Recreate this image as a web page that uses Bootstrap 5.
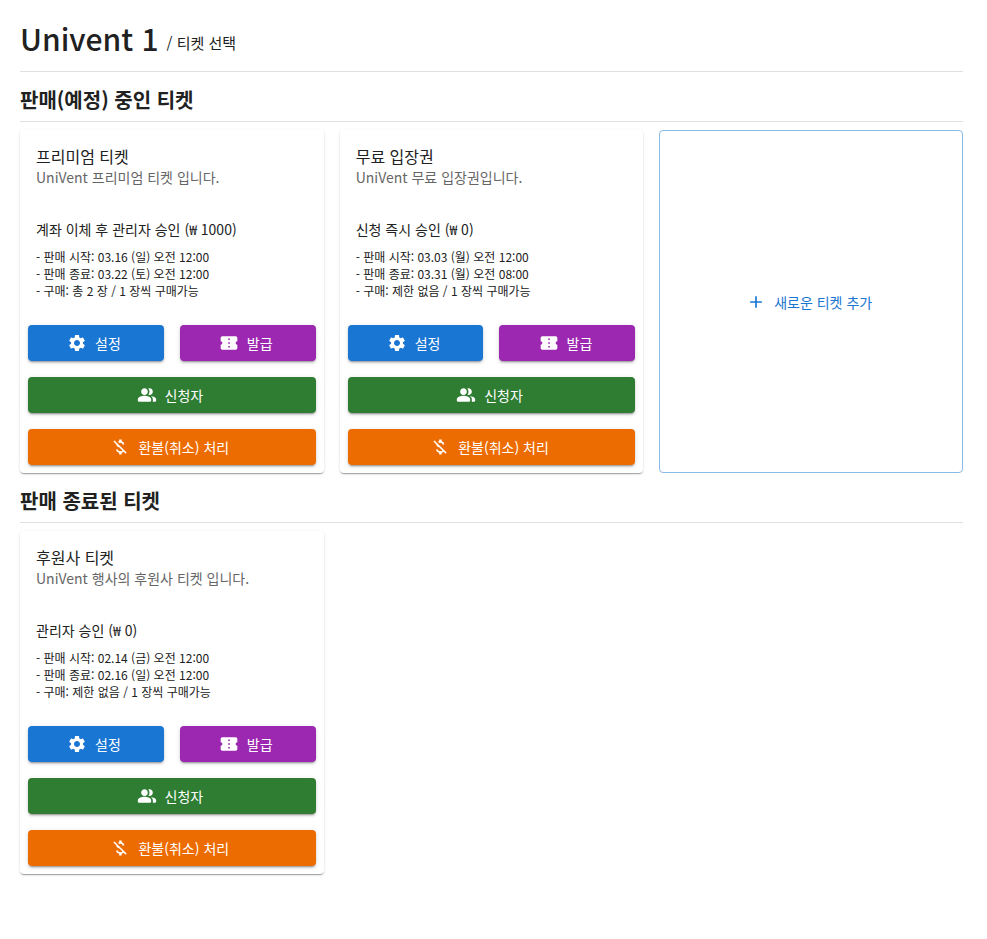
<!DOCTYPE html>
<html lang="ko">
<head>
<meta charset="utf-8">
<meta name="viewport" content="width=device-width, initial-scale=1">
<title>Univent 1 / 티켓 선택</title>
<link href="https://cdn.jsdelivr.net/npm/bootstrap@5.3.0/dist/css/bootstrap.min.css" rel="stylesheet">
<style>
body{font-family:"Noto Sans CJK KR","Noto Sans",sans-serif;color:#212121;background:#fff;font-size:14px;line-height:22px}
.page{padding:16px 24px 40px 20px}
.page-head{border-bottom:1px solid #e0e0e0;padding-bottom:11px}
.page-title{font-size:30px;line-height:44px;font-weight:500}
.crumb{font-size:15px;line-height:34px}
.section-title{font-size:20px;line-height:32px;font-weight:700;border-bottom:1px solid #e0e0e0;padding:12px 0 5px;margin-bottom:8px}
.ticket{border:0;border-radius:4px;color:inherit;box-shadow:0 2px 1px -1px rgba(0,0,0,.2),0 1px 1px rgba(0,0,0,.14),0 1px 3px rgba(0,0,0,.12)}
.ticket-info{padding:16px 16px 18px}
.ticket-name{font-size:16px;line-height:20px;font-weight:400}
.ticket-desc{color:#666;margin-bottom:30px}
.ticket-lines{font-size:12px;line-height:17px}
.btn{--bs-btn-font-size:14px;--bs-btn-line-height:24px;--bs-btn-border-radius:4px;--bs-btn-border-width:0}
.act{color:#fff;padding:6px 16px;box-shadow:0 3px 1px -2px rgba(0,0,0,.2),0 2px 2px rgba(0,0,0,.14),0 1px 5px rgba(0,0,0,.12)}
.act:hover{color:#fff;filter:brightness(.9)}
.act svg,.add-ticket svg{width:20px;height:20px;margin-left:-4px;fill:currentColor}
.act-set,.act-set:hover{background:#1976d2}
.act-issue,.act-issue:hover{background:#9c27b0}
.act-people,.act-people:hover{background:#2e7d32}
.act-refund,.act-refund:hover{background:#ed6c02}
.add-ticket{--bs-btn-border-width:1px;color:#1976d2;border-color:#8cbae8}
</style>
</head>
<body>
<svg class="d-none" aria-hidden="true">
<symbol id="i-set" viewBox="0 0 24 24"><path d="M19.14 12.94c.04-.3.06-.61.06-.94 0-.32-.02-.64-.07-.94l2.03-1.58c.18-.14.23-.41.12-.61l-1.92-3.32c-.12-.22-.37-.29-.59-.22l-2.39.96c-.5-.38-1.03-.7-1.62-.94l-.36-2.54c-.04-.24-.24-.41-.48-.41h-3.84c-.24 0-.43.17-.47.41l-.36 2.54c-.59.24-1.13.57-1.62.94l-2.39-.96c-.22-.08-.47 0-.59.22L2.74 8.87c-.12.21-.08.47.12.61l2.03 1.58c-.05.3-.09.63-.09.94s.02.64.07.94l-2.03 1.58c-.18.14-.23.41-.12.61l1.92 3.32c.12.22.37.29.59.22l2.39-.96c.5.38 1.03.7 1.62.94l.36 2.54c.05.24.24.41.48.41h3.84c.24 0 .44-.17.47-.41l.36-2.54c.59-.24 1.13-.56 1.62-.94l2.39.96c.22.08.47 0 .59-.22l1.92-3.32c.12-.22.07-.47-.12-.61l-2.01-1.58zM12 15.6c-1.98 0-3.6-1.62-3.6-3.6s1.62-3.6 3.6-3.6 3.6 1.62 3.6 3.6-1.62 3.6-3.6 3.6z"/></symbol>
<symbol id="i-issue" viewBox="0 0 24 24"><path d="M22 10V6c0-1.11-.9-2-2-2H4c-1.1 0-1.99.89-1.99 2v4c1.1 0 1.99.9 1.99 2s-.89 2-2 2v4c0 1.1.9 2 2 2h16c1.1 0 2-.9 2-2v-4c-1.1 0-2-.9-2-2s.9-2 2-2zm-9 7.5h-2v-2h2v2zm0-4.5h-2v-2h2v2zm0-4.5h-2v-2h2v2z"/></symbol>
<symbol id="i-people" viewBox="0 0 24 24"><path d="M16.67 13.13C18.04 14.06 19 15.32 19 17v3h3c.55 0 1-.45 1-1v-2c0-2.18-3.57-3.47-6.33-3.87zM15 12c2.21 0 4-1.79 4-4s-1.79-4-4-4c-.47 0-.91.1-1.33.24C14.5 5.27 15 6.58 15 8s-.5 2.73-1.33 3.76c.42.14.86.24 1.33.24zM9 12c2.21 0 4-1.79 4-4s-1.79-4-4-4-4 1.79-4 4 1.79 4 4 4zm0 1c-2.67 0-8 1.34-8 4v2c0 .55.45 1 1 1h14c.55 0 1-.45 1-1v-2c0-2.66-5.33-4-8-4z"/></symbol>
<symbol id="i-refund" viewBox="0 0 24 24"><path d="M12.5 6.9c1.78 0 2.44.85 2.5 2.1h2.21c-.07-1.72-1.12-3.3-3.21-3.81V3h-3v2.16c-.53.12-1.03.3-1.48.54l1.47 1.47c.41-.17.91-.27 1.51-.27zM5.33 4.06 4.06 5.33 7.5 8.77c0 2.08 1.56 3.21 3.91 3.91l3.51 3.51c-.34.48-1.05.91-2.42.91-2.06 0-2.87-.92-2.98-2.1h-2.2c.12 2.19 1.76 3.42 3.68 3.83V21h3v-2.15c.96-.18 1.82-.55 2.45-1.12l2.22 2.22 1.27-1.27L5.33 4.06z"/></symbol>
<symbol id="i-add" viewBox="0 0 24 24"><path d="M19 13h-6v6h-2v-6H5v-2h6V5h2v6h6v2z"/></symbol>
</svg>
<main class="page">
<header class="page-head d-flex align-items-end gap-2">
<h1 class="page-title m-0">Univent 1</h1><span class="crumb">/ 티켓 선택</span>
</header>
<section>
<h2 class="section-title">판매(예정) 중인 티켓</h2>
<div class="row row-cols-3 gx-3">
<div class="col"><article class="card ticket">
<div class="ticket-info">
<h3 class="ticket-name m-0">프리미엄 티켓</h3>
<p class="ticket-desc">UniVent 프리미엄 티켓 입니다.</p>
<p class="mb-2">계좌 이체 후 관리자 승인 (₩ 1000)</p>
<div class="ticket-lines"><div>- 판매 시작: 03.16 (일) 오전 12:00</div><div>- 판매 종료: 03.22 (토) 오전 12:00</div><div>- 구매: 총 2 장 / 1 장씩 구매가능</div></div>
</div>
<div class="d-grid gap-3 p-2">
<div class="d-flex gap-3">
<button type="button" class="btn act act-set flex-fill d-flex justify-content-center align-items-center gap-2"><svg aria-hidden="true"><use href="#i-set"/></svg>설정</button>
<button type="button" class="btn act act-issue flex-fill d-flex justify-content-center align-items-center gap-2"><svg aria-hidden="true"><use href="#i-issue"/></svg>발급</button>
</div>
<button type="button" class="btn act act-people d-flex justify-content-center align-items-center gap-2"><svg aria-hidden="true"><use href="#i-people"/></svg>신청자</button>
<button type="button" class="btn act act-refund d-flex justify-content-center align-items-center gap-2"><svg aria-hidden="true"><use href="#i-refund"/></svg>환불(취소) 처리</button>
</div>
</article></div>
<div class="col"><article class="card ticket">
<div class="ticket-info">
<h3 class="ticket-name m-0">무료 입장권</h3>
<p class="ticket-desc">UniVent 무료 입장권입니다.</p>
<p class="mb-2">신청 즉시 승인 (₩ 0)</p>
<div class="ticket-lines"><div>- 판매 시작: 03.03 (월) 오전 12:00</div><div>- 판매 종료: 03.31 (월) 오전 08:00</div><div>- 구매: 제한 없음 / 1 장씩 구매가능</div></div>
</div>
<div class="d-grid gap-3 p-2">
<div class="d-flex gap-3">
<button type="button" class="btn act act-set flex-fill d-flex justify-content-center align-items-center gap-2"><svg aria-hidden="true"><use href="#i-set"/></svg>설정</button>
<button type="button" class="btn act act-issue flex-fill d-flex justify-content-center align-items-center gap-2"><svg aria-hidden="true"><use href="#i-issue"/></svg>발급</button>
</div>
<button type="button" class="btn act act-people d-flex justify-content-center align-items-center gap-2"><svg aria-hidden="true"><use href="#i-people"/></svg>신청자</button>
<button type="button" class="btn act act-refund d-flex justify-content-center align-items-center gap-2"><svg aria-hidden="true"><use href="#i-refund"/></svg>환불(취소) 처리</button>
</div>
</article></div>
<div class="col d-flex">
<button type="button" class="btn add-ticket w-100 d-flex justify-content-center align-items-center gap-2"><svg aria-hidden="true"><use href="#i-add"/></svg>새로운 티켓 추가</button>
</div>
</div>
</section>
<section>
<h2 class="section-title">판매 종료된 티켓</h2>
<div class="row row-cols-3 gx-3">
<div class="col"><article class="card ticket">
<div class="ticket-info">
<h3 class="ticket-name m-0">후원사 티켓</h3>
<p class="ticket-desc">UniVent 행사의 후원사 티켓 입니다.</p>
<p class="mb-2">관리자 승인 (₩ 0)</p>
<div class="ticket-lines"><div>- 판매 시작: 02.14 (금) 오전 12:00</div><div>- 판매 종료: 02.16 (일) 오전 12:00</div><div>- 구매: 제한 없음 / 1 장씩 구매가능</div></div>
</div>
<div class="d-grid gap-3 p-2">
<div class="d-flex gap-3">
<button type="button" class="btn act act-set flex-fill d-flex justify-content-center align-items-center gap-2"><svg aria-hidden="true"><use href="#i-set"/></svg>설정</button>
<button type="button" class="btn act act-issue flex-fill d-flex justify-content-center align-items-center gap-2"><svg aria-hidden="true"><use href="#i-issue"/></svg>발급</button>
</div>
<button type="button" class="btn act act-people d-flex justify-content-center align-items-center gap-2"><svg aria-hidden="true"><use href="#i-people"/></svg>신청자</button>
<button type="button" class="btn act act-refund d-flex justify-content-center align-items-center gap-2"><svg aria-hidden="true"><use href="#i-refund"/></svg>환불(취소) 처리</button>
</div>
</article></div>
</div>
</section>
</main>
<script src="https://cdn.jsdelivr.net/npm/bootstrap@5.3.0/dist/js/bootstrap.bundle.min.js"></script>
</body>
</html>
